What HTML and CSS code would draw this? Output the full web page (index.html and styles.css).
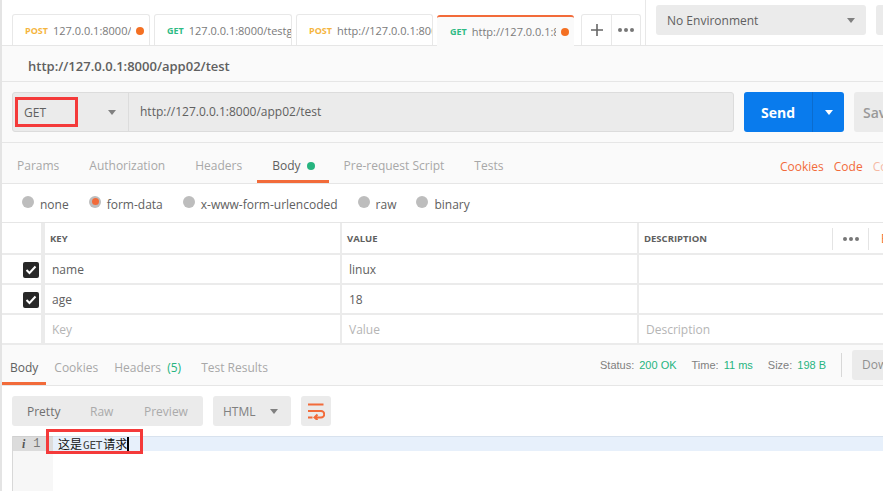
FILE: index.html
```html
<!DOCTYPE html>
<html lang="en">
<head>
<meta charset="utf-8">
<title>Postman</title>
<link rel="stylesheet" href="styles.css">
</head>
<body>
<div class="app">
  <header class="tabbar">
    <div class="tab tab-a"><span class="m post">POST</span><span class="t">127.0.0.1:8000/</span><i class="dot"></i></div>
    <div class="tab tab-b"><span class="m get">GET</span><span class="t">127.0.0.1:8000/testg</span></div>
    <div class="tab tab-c"><span class="m post">POST</span><span class="t">http://127.0.0.1:8000</span></div>
    <div class="tab tab-d active"><span class="m get">GET</span><span class="t">http://127.0.0.1:8000</span><i class="dot"></i></div>
    <div class="addbox">
      <div class="add"><svg width="14" height="14" viewBox="0 0 14 14"><path d="M7 1v12M1 7h12" stroke="#666" stroke-width="1.6"/></svg></div>
      <div class="more"><i></i><i></i><i></i></div>
    </div>
    <div class="envwrap">
      <div class="env"><span>No Environment</span><b class="caret"></b></div>
      <div class="envbtn"></div>
    </div>
  </header>
  <div class="title">http://127.0.0.1:8000/app02/test</div>
  <div class="urlrow">
    <div class="urlbox">
      <div class="method"><span>GET</span><b class="caret"></b></div>
      <div class="url">http://127.0.0.1:8000/app02/test</div>
    </div>
    <div class="send"><span class="sendl">Send</span><span class="sendc"><b class="caret white"></b></span></div>
    <div class="save">Save</div>
  </div>
  <nav class="reqtabs">
    <span class="rt w-params">Params</span>
    <span class="rt w-auth">Authorization</span>
    <span class="rt w-head">Headers</span>
    <span class="rt on w-body">Body<i class="gdot"></i></span>
    <span class="rt w-pre">Pre-request Script</span>
    <span class="rt w-tests">Tests</span>
    <span class="links"><span>Cookies</span><span>Code</span><span class="faded">Comments</span></span>
  </nav>
  <div class="radios">
    <span class="r"><i class="rd"></i>none</span>
    <span class="r"><i class="rd sel"></i>form-data</span>
    <span class="r"><i class="rd"></i>x-www-form-urlencoded</span>
    <span class="r"><i class="rd"></i>raw</span>
    <span class="r"><i class="rd"></i>binary</span>
  </div>
  <div class="table">
    <div class="row head">
      <div class="c0"></div><div class="c1">KEY</div><div class="c2">VALUE</div>
      <div class="c3"><span class="dsc">DESCRIPTION</span><span class="hmore"><i></i><i></i><i></i></span><span class="bulk">Bulk Edit</span></div>
    </div>
    <div class="row">
      <div class="c0"><span class="chk"><svg width="12" height="10" viewBox="0 0 12 10"><path d="M1.500 5l3 3 6-6.500" fill="none" stroke="#fff" stroke-width="2"/></svg></span></div>
      <div class="c1 v">name</div><div class="c2 v">linux</div><div class="c3"></div>
    </div>
    <div class="row">
      <div class="c0"><span class="chk"><svg width="12" height="10" viewBox="0 0 12 10"><path d="M1.500 5l3 3 6-6.500" fill="none" stroke="#fff" stroke-width="2"/></svg></span></div>
      <div class="c1 v">age</div><div class="c2 v">18</div><div class="c3"></div>
    </div>
    <div class="row">
      <div class="c0"></div><div class="c1 v ph">Key</div><div class="c2 v ph">Value</div><div class="c3 v ph">Description</div>
    </div>
  </div>
  <div class="restabs">
    <span class="bt on">Body</span>
    <span class="bt">Cookies</span>
    <span class="bt">Headers <em>(5)</em></span>
    <span class="bt tr">Test Results</span>
    <div class="status">
      <span>Status:<b>200 OK</b></span><span>Time:<b>11 ms</b></span><span>Size:<b>198 B</b></span>
      <i class="vr"></i>
      <span class="dl">Download</span>
    </div>
  </div>
  <div class="toolbar">
    <div class="seg"><span class="dark">Pretty</span><span>Raw</span><span>Preview</span></div>
    <div class="fmt"><span>HTML</span><b class="caret"></b></div>
    <div class="wrap"><svg width="18" height="17" viewBox="0 0 18 17"><path d="M1 1.500h15.500M1 8h13a2.800 2.800 0 0 1 0 6.500H8M1 14.500h4.500M10.500 11.500l-3 3 3 2.500" fill="none" stroke="#f26b3a" stroke-width="2"/></svg></div>
  </div>
  <div class="editor">
    <div class="gutter"><div class="gline"><span class="info">i</span><span class="ln">1</span></div></div>
    <div class="code"><div class="cline"><span class="ctext">这是<span class="cmono">GET</span>请求</span><i class="cursor"></i></div></div>
  </div>
  <div class="mark mark-a"></div>
  <div class="mark mark-b"></div>
</div>
</body>
</html>
```
FILE: styles.css
```css
* { box-sizing: border-box; }
html, body { margin: 0; padding: 0; }
body { width: 883px; height: 491px; overflow: hidden; background: #fff; font-family: "Open Sans", "Noto Sans", sans-serif; color: #505050; }
i, b, em { font-style: normal; }
.app { position: relative; width: 883px; height: 491px; border-left: 2px solid #e4e4e4; overflow: hidden; }

.tabbar { display: flex; align-items: flex-end; height: 46px; padding-left: 10px; border-bottom: 1px solid #e6e6e6; background: #fff; }
.tab { flex: none; display: flex; align-items: center; height: 31px; margin-right: 4px; padding: 1px 0 0 12px; border: 1px solid #e8e8e8; border-bottom: 0; border-radius: 3px 3px 0 0; background: #fff; font-size: 11px; white-space: nowrap; overflow: hidden; color: #7a7a7a; }
.tab-a { width: 138px; }
.tab-b { width: 138px; }
.tab-c { width: 137px; }
.tab-d { width: 137px; margin-right: 7px; background: #fafafa; border: 0; border-top: 2px solid #f26b3a; padding: 0 0 0 13px; height: 31px; margin-bottom: -1px; }
.m { flex: none; font-size: 9px; font-weight: 700; margin-right: 5px; }
.post { color: #f5b53d; }
.get { color: #2fbb85; }
.t { flex: 1; min-width: 0; overflow: hidden; }
.tab .dot { flex: none; width: 8px; height: 8px; margin: 0 5px; border-radius: 50%; background: #f47023; }
.addbox { flex: none; display: flex; height: 31px; width: 60px; border: 1px solid #e8e8e8; border-bottom: 0; border-radius: 3px 3px 0 0; }
.add { display: flex; align-items: center; justify-content: center; width: 30px; border-right: 1px solid #e8e8e8; }
.more { display: flex; align-items: center; justify-content: center; flex: 1; gap: 2px; }
.more i, .hmore i { width: 4px; height: 4px; border-radius: 50%; background: #777; }
.envwrap { display: flex; align-self: stretch; height: 45px; margin-left: 4px; padding: 5px 0 0 10px; border-left: 1px solid #e8e8e8; gap: 10px; flex: 1; min-width: 0; }
.env { flex: none; display: flex; align-items: center; justify-content: space-between; width: 210px; height: 30px; padding: 0 11px; background: #ebebeb; border-radius: 3px; font-size: 12px; color: #606060; }
.envbtn { flex: none; width: 40px; height: 30px; background: #ebebeb; border-radius: 3px; }
.caret { display: inline-block; width: 0; height: 0; border-left: 4px solid transparent; border-right: 4px solid transparent; border-top: 5px solid #808080; }
.caret.white { border-top-color: #fff; }

.title { height: 36px; padding: 11px 0 0 26px; background: #fafafa; border-bottom: 1px solid #e6e6e6; font-size: 13px; font-weight: 600; line-height: 18px; color: #606060; }
.urlrow { display: flex; height: 61px; padding: 10px 0 0 10px; background: #fafafa; border-bottom: 1px solid #e6e6e6; }
.urlbox { flex: none; display: flex; width: 722px; height: 40px; background: #ebebeb; border: 1px solid #dcdcdc; border-radius: 3px; }
.method { display: flex; align-items: center; justify-content: space-between; width: 116px; padding: 0 12px 0 11px; border-right: 1px solid #dcdcdc; font-size: 12px; color: #606060; }
.url { padding-left: 11px; font-size: 12px; line-height: 38px; color: #606060; }
.send { flex: none; display: flex; width: 100px; height: 40px; margin-left: 10px; background: #097bed; border-radius: 3px; color: #fff; font-size: 14px; font-weight: 700; }
.sendl { width: 69px; text-align: center; line-height: 41px; border-right: 1px solid #0b6cce; }
.sendc { display: flex; flex: 1; align-items: center; justify-content: center; }
.save { flex: none; width: 60px; height: 40px; margin-left: 10px; padding-left: 9px; background: #ebebeb; border-radius: 3px; font-size: 14px; font-weight: 600; line-height: 41px; color: #999; white-space: nowrap; overflow: hidden; }

.reqtabs { position: relative; display: flex; height: 41px; background: #fafafa; border-bottom: 1px solid #e6e6e6; font-size: 12px; color: #a8a8a8; padding-left: 15px; }
.rt { line-height: 46px; white-space: nowrap; margin-right: 30px; }
.w-body { margin-right: 29px; }
.rt.on { color: #606060; position: relative; }
.rt.on::after { content: ""; position: absolute; left: -15px; right: -14px; bottom: 0; height: 3px; background: #f26b3a; }
.gdot { display: inline-block; width: 8px; height: 8px; margin-left: 6px; border-radius: 50%; background: #26b47f; vertical-align: 0; }
.links { position: absolute; left: 778px; top: 0; display: flex; gap: 10px; line-height: 48px; color: #f26b3a; white-space: nowrap; }
.faded { opacity: .45; }

.radios { display: flex; height: 39px; border-bottom: 1px solid #e6e6e6; padding: 2px 0 0 20px; font-size: 12px; color: #606060; align-items: center; background: #fff; }
.r { display: flex; align-items: center; margin-right: 20px; white-space: nowrap; }
.rd { width: 12px; height: 12px; margin: -5px 6px 0 0; border-radius: 50%; background: #bdbdbd; position: relative; }
.rd.sel::after { content: ""; position: absolute; left: 3px; top: 2px; width: 7px; height: 7px; border-radius: 50%; background: #f26b3a; }

.table { display: flex; flex-direction: column; background: #fff; }
.row { display: grid; grid-template-columns: 43px 297px 297px 1fr; height: 30px; border-bottom: 2px solid #ebebeb; }
.row > div { border-right: 2px solid #ebebeb; font-size: 12px; line-height: 30px; padding-left: 5px; color: #606060; }
.row > .c0 { border-right-width: 4px; }
.row.head { height: 32px; }
.row.head > div { font-size: 9.500px; font-weight: 700; line-height: 31px; padding-left: 5px; }
.row > .c3 { border-right: 0; }
.row > .c0 { display: flex; align-items: center; padding-left: 21px; }
.row > .ph { color: #b5b5b5; }
.row > .v { padding-left: 7px; }
.chk { display: flex; align-items: center; justify-content: center; width: 16px; height: 16px; border-radius: 2px; background: #282828; }
.row.head .c3 { position: relative; }
.hmore { position: absolute; left: 193px; top: 5px; width: 37px; height: 22px; display: flex; align-items: center; justify-content: center; gap: 2px; border-left: 1px solid #e4e4e4; border-right: 1px solid #e4e4e4; }
.bulk { position: absolute; left: 242px; top: 0; font-size: 12px; font-weight: 400; color: #f26b3a; white-space: nowrap; }

.restabs { position: relative; display: flex; height: 41px; padding-left: 8px; background: #fafafa; border-bottom: 1px solid #e6e6e6; font-size: 12px; color: #a8a8a8; }
.bt { margin-right: 16px; line-height: 46px; white-space: nowrap; }
.bt.tr { margin-left: 4px; }
.bt em { color: #26b47f; margin-left: 3px; }
.bt.on { position: relative; color: #606060; }
.bt.on::after { content: ""; position: absolute; left: -8px; right: -8px; bottom: 0; height: 3px; background: #f26b3a; }
.status { position: absolute; left: 598px; top: 0; display: flex; align-items: center; height: 40px; gap: 15px; font-family: "Liberation Sans", Arial, sans-serif; font-size: 11px; color: #808080; white-space: nowrap; }
.status b { margin-left: 5px; font-weight: 400; color: #26b47f; }
.vr { width: 1px; height: 24px; background: #d8d8d8; }
.dl { width: 60px; height: 30px; margin-left: -5px; padding-left: 10px; background: #ebebeb; border-radius: 3px; font-family: "Open Sans", sans-serif; font-size: 12px; line-height: 30px; color: #909090; }

.toolbar { display: flex; height: 50px; padding: 10px 0 0 10px; background: #fff; gap: 10px; }
.seg { display: flex; align-items: center; width: 191px; height: 30px; padding-left: 15px; background: #ebebeb; border-radius: 3px; font-size: 12px; color: #aaa; }
.seg span:nth-child(1) { width: 63px; color: #707070; }
.seg span:nth-child(2) { width: 54px; }
.fmt { display: flex; align-items: center; justify-content: space-between; width: 78px; height: 30px; padding: 0 13px 0 10px; background: #ebebeb; border-radius: 3px; font-size: 12px; color: #808080; }
.wrap { display: flex; align-items: center; justify-content: center; width: 30px; height: 30px; background: #ebebeb; border-radius: 3px; }

.editor { display: flex; height: 55px; margin-left: 10px; border-left: 1px solid #d8d8d8; }
.gutter { width: 40px; background: #f7f7f7; flex: none; }
.gline { display: flex; align-items: center; gap: 8px; height: 15px; padding-left: 9px; background: #dcdcdc; border-top: 1px solid #d0d0d0; font-family: "Liberation Mono", monospace; font-size: 12px; color: #777; }
.info { font-family: "Liberation Serif", serif; font-weight: 700; font-style: italic; color: #555; }
.code { flex: 1; min-width: 0; }
.cline { display: flex; align-items: flex-start; height: 15px; padding-left: 5px; background: #e7f0fb; border-top: 1px solid #d8e2ee; }
.ctext { font-family: "Noto Sans CJK SC", "DejaVu Sans", sans-serif; font-size: 12px; line-height: 14px; color: #111; white-space: nowrap; }
.cmono { font-family: "DejaVu Sans Mono", monospace; font-size: 11px; color: #444; margin: 0 1px; letter-spacing: -.2px; }
.cursor { width: 2px; height: 14px; background: #000; }
.mark { position: absolute; border: 3px solid #f43a3a; }
.mark-a { left: 13px; top: 97px; width: 63px; height: 30px; }
.mark-b { left: 44px; top: 429px; width: 97px; height: 25px; }
```
